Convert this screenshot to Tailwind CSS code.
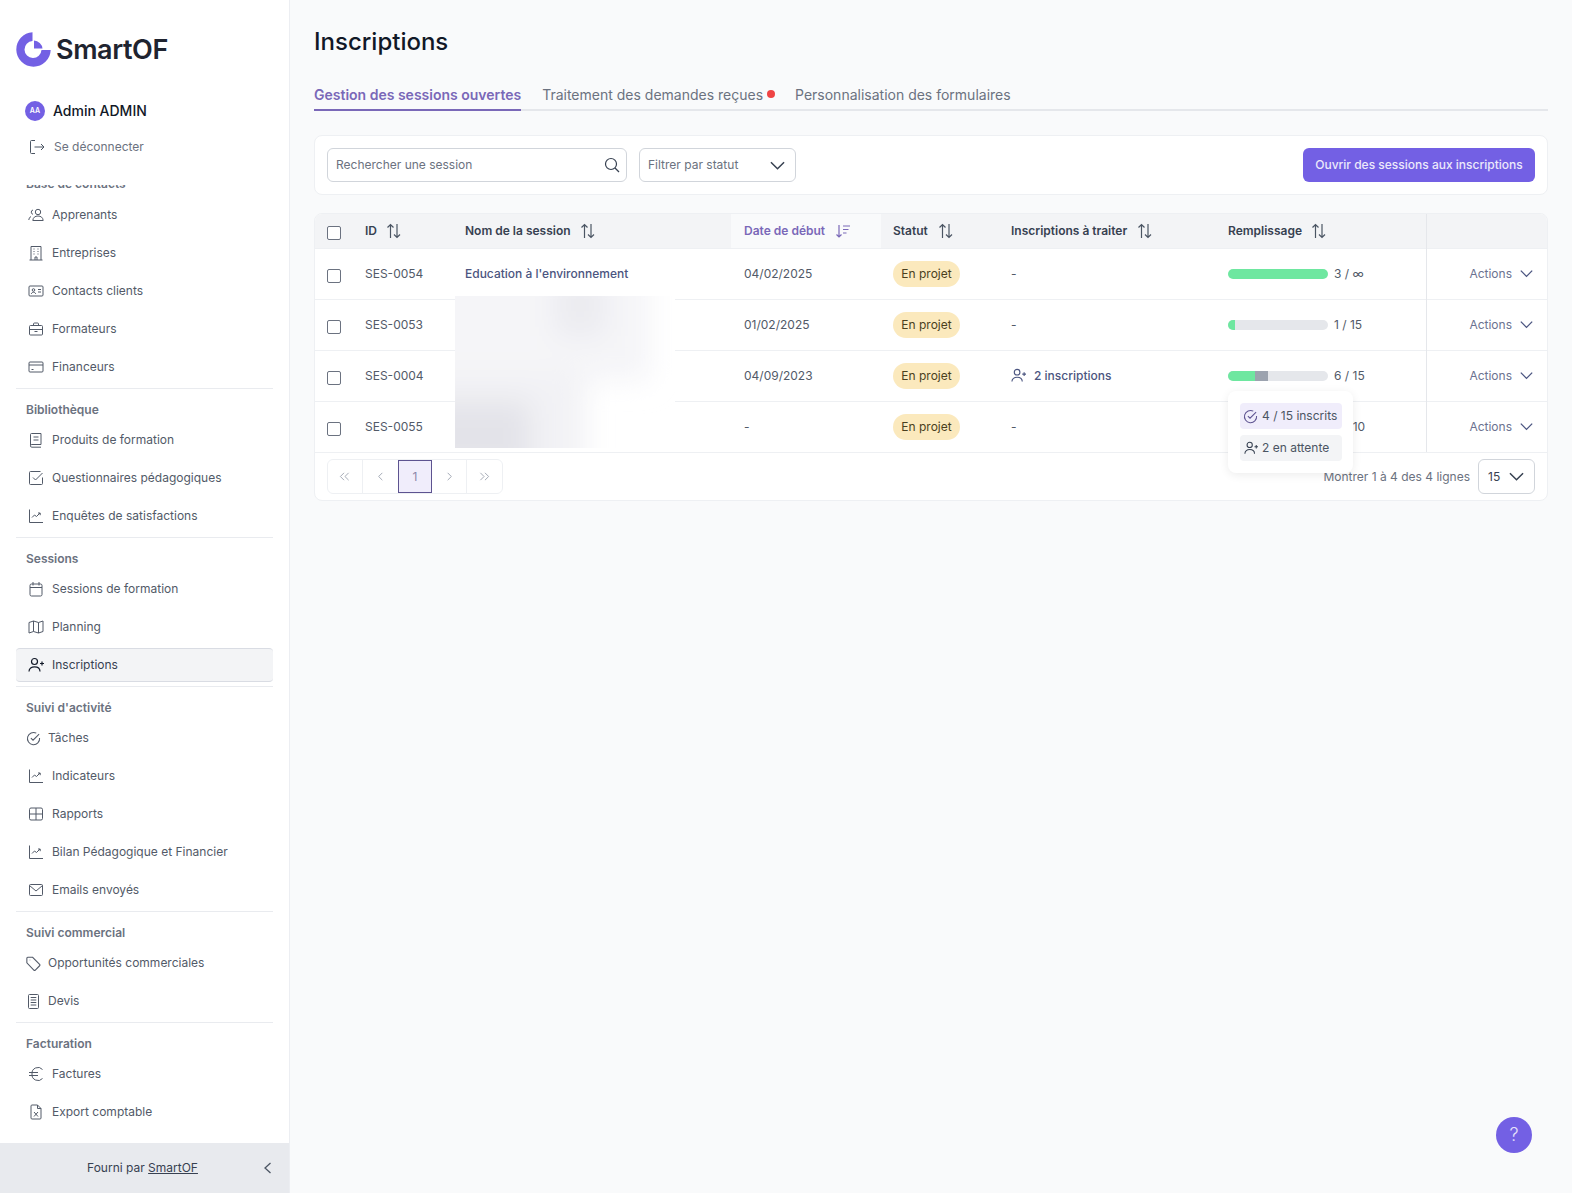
<!DOCTYPE html>
<html lang="fr"><head><meta charset="utf-8"><script src="https://cdn.jsdelivr.net/npm/@tailwindcss/browser@4"></script><title>Inscriptions</title></head>
<body class="m-0 h-[1193px] overflow-hidden bg-[#f9fafb] font-['Inter',sans-serif] text-[12px] text-[#525a68]">
<svg width="0" height="0" class="absolute">
<defs>
<symbol id="chart" viewBox="0 0 16 16" fill="none" stroke="currentColor" stroke-width="1"><path d="M1.500 1.500v13h13.500M4 9.500l2.500-2.500 2 1.500 3.500-3.500M10 5h2.200v2.200"/></symbol>
<symbol id="sort" viewBox="0 0 16 16" fill="none" stroke="currentColor" stroke-width="1.200"><path d="M4.500 15V1.500M1.500 4.500l3-3 3 3M11 1v13.500M8 11.500l3 3 3-3"/></symbol>
<symbol id="chev" viewBox="0 0 16 16" fill="none" stroke="currentColor" stroke-width="1.600"><path d="M1 4.500l7 7 7-7"/></symbol>
<symbol id="userplus" viewBox="0 0 16 16" fill="none" stroke="currentColor" stroke-width="1.200"><circle cx="6.500" cy="4.500" r="3"/><path d="M1 14.500c0-3 2.500-4.700 5.500-4.700s5.500 1.700 5.500 4.700M12 6.500h4M14 4.500v4"/></symbol>
<symbol id="checkc" viewBox="0 0 16 16" fill="none" stroke="currentColor" stroke-width="1.100"><path d="M14.500 7.400A6.500 6.500 0 1 1 11 2.300M5.200 7.500l2.300 2.300 6.500-6.500"/></symbol>
</defs>
</svg>
<div class="flex h-[1193px]">
<aside class="flex w-[290px] shrink-0 flex-col border-r border-[#eceef2] bg-white">
 <div class="flex h-[100px] shrink-0 items-start pl-4 pt-8">
  <svg width="35" height="35" viewBox="0 0 35 35" class="shrink-0"><path d="M16.500 .3A17.200 17.200 0 1 0 34.700 18L25.500 18A8.500 8.500 0 1 1 16.500 9Z" fill="#7360e4"/><path d="M18 8.500A9 9 0 0 1 26.500 16.500L18 16.500Z" fill="#7360e4"/></svg>
  <span class="ml-[5px] text-[27px] leading-[35px] font-semibold tracking-[-0.4px] text-[#1f2430]">SmartOF</span>
 </div>
 <div class="flex h-[22px] shrink-0 items-center pl-[25px]">
  <span class="flex size-5 items-center justify-center rounded-full bg-[#7360e4] text-[7px] font-semibold text-white">AA</span>
  <span class="ml-2 text-sm font-medium text-[#111827]">Admin ADMIN</span>
 </div>
 <div class="mt-[17px] flex h-4 shrink-0 items-center pl-[29px]">
  <svg class="size-4 text-[#4b5563]" viewBox="0 0 16 16" fill="none" stroke="currentColor"><path d="M6 1.500H2.500A1 1 0 0 0 1.500 2.500v11a1 1 0 0 0 1 1H6M5.500 8h9.500M12 5l3 3-3 3"/></svg>
  <span class="ml-[9px] text-[#6b7280]">Se déconnecter</span>
 </div>
 <nav class="mt-[30px] min-h-0 flex-1 overflow-hidden">
  <div class="-mt-[8px] px-4">
   <div class="flex h-[14px] items-center pl-[10px] font-semibold text-[#6b7280]">Base de contacts</div>
   <ul class="mt-[5px]">
    <li class="flex h-[38px] items-center gap-2 pl-3"><svg class="size-4 -scale-x-100" viewBox="0 0 16 16" fill="none" stroke="currentColor"><circle cx="6" cy="5" r="2.700"/><path d="M.8 13.500c.3-3 2.300-4.500 5.200-4.500s5 1.500 5.200 4.500zM11 3a2.200 2.200 0 0 1 0 4.300M13 9.500c1.300.6 2 2 2.200 3.500"/></svg><span>Apprenants</span></li>
    <li class="flex h-[38px] items-center gap-2 pl-3"><svg class="size-4" viewBox="0 0 16 16" fill="none" stroke="currentColor"><path d="M3 15V1.500h10V15M1.500 15h13M7 15v-3h2v3M5.500 4h1M9.500 4h1M5.500 6.500h1M9.500 6.500h1M5.500 9h1M9.500 9h1"/></svg><span>Entreprises</span></li>
    <li class="flex h-[38px] items-center gap-2 pl-3"><svg class="size-4" viewBox="0 0 16 16" fill="none" stroke="currentColor"><rect x="1" y="3" width="14" height="10" rx="1"/><circle cx="5.500" cy="7" r="1.300"/><path d="M3.300 11c.3-1.200 1.200-1.800 2.200-1.800s1.900.6 2.200 1.800M10 6.500h3M10 9h3"/></svg><span>Contacts clients</span></li>
    <li class="flex h-[38px] items-center gap-2 pl-3"><svg class="size-4" viewBox="0 0 16 16" fill="none" stroke="currentColor"><rect x="1.500" y="4.500" width="13" height="9.500" rx="1"/><path d="M5.500 4.500V3a1 1 0 0 1 1-1h3a1 1 0 0 1 1 1v1.500M1.500 8.500h13M6.500 10.500h3"/></svg><span>Formateurs</span></li>
    <li class="flex h-[38px] items-center gap-2 pl-3"><svg class="size-4" viewBox="0 0 16 16" fill="none" stroke="currentColor"><rect x="1" y="3" width="14" height="10" rx="1"/><path d="M1 6h14M3.500 10.500h2"/></svg><span>Financeurs</span></li>
   </ul>
   <div class="mt-[2px] border-t border-[#e9ebef]"></div>
   <div class="mt-[14px] flex h-[14px] items-center pl-[10px] font-semibold text-[#6b7280]">Bibliothèque</div>
   <ul class="mt-[4px]">
    <li class="flex h-[38px] items-center gap-2 pl-3"><svg class="size-4" viewBox="0 0 16 16" fill="none" stroke="currentColor"><path d="M2.500 13V2.500a1 1 0 0 1 1-1h9.500v11H3.800a1.300 1.300 0 0 0 0 2.700H13M5.500 5h5M5.500 8h5"/></svg><span>Produits de formation</span></li>
    <li class="flex h-[38px] items-center gap-2 pl-3"><svg class="size-4" viewBox="0 0 16 16" fill="none" stroke="currentColor"><path d="M14.500 7.500v6a1 1 0 0 1-1 1h-11a1 1 0 0 1-1-1v-11a1 1 0 0 1 1-1h10M5 7.500l2.500 2.500 7-7"/></svg><span>Questionnaires pédagogiques</span></li>
    <li class="flex h-[38px] items-center gap-2 pl-3"><svg class="size-4"><use href="#chart"/></svg><span>Enquêtes de satisfactions</span></li>
   </ul>
   <div class="mt-[2px] border-t border-[#e9ebef]"></div>
   <div class="mt-[14px] flex h-[14px] items-center pl-[10px] font-semibold text-[#6b7280]">Sessions</div>
   <ul class="mt-[4px]">
    <li class="flex h-[38px] items-center gap-2 pl-3"><svg class="size-4" viewBox="0 0 16 16" fill="none" stroke="currentColor"><rect x="2" y="3" width="12" height="12" rx="1.500"/><path d="M5 1v3.500M11 1v3.500M2 6.500h12"/></svg><span>Sessions de formation</span></li>
    <li class="flex h-[38px] items-center gap-2 pl-3"><svg class="size-4" viewBox="0 0 16 16" fill="none" stroke="currentColor"><path d="M1 3.500 5.500 2l5 1.500L15 2v10.500L10.500 14l-5-1.500L1 14zM5.500 2v10.500M10.500 3.500V14"/></svg><span>Planning</span></li>
    <li class="my-[2px] flex h-[34px] items-center gap-2 rounded-[4px] border-y border-[#d9dce3] bg-[#f3f4f6] pl-3 text-[#374151]"><svg class="size-4 text-[#111827]"><use href="#userplus"/></svg><span>Inscriptions</span></li>
   </ul>
   <div class="mt-[4px] border-t border-[#e9ebef]"></div>
   <div class="mt-[14px] flex h-[14px] items-center pl-[10px] font-semibold text-[#6b7280]">Suivi d'activité</div>
   <ul class="mt-[4px]">
    <li class="flex h-[38px] items-center gap-[7px] pl-[10px]"><svg class="size-[15px]"><use href="#checkc"/></svg><span>Tâches</span></li>
    <li class="flex h-[38px] items-center gap-2 pl-3"><svg class="size-4"><use href="#chart"/></svg><span>Indicateurs</span></li>
    <li class="flex h-[38px] items-center gap-2 pl-3"><svg class="size-4" viewBox="0 0 16 16" fill="none" stroke="currentColor"><rect x="1.500" y="2" width="13" height="12" rx="1.500"/><path d="M1.500 8h13M8 2v12"/></svg><span>Rapports</span></li>
    <li class="flex h-[38px] items-center gap-2 pl-3"><svg class="size-4"><use href="#chart"/></svg><span>Bilan Pédagogique et Financier</span></li>
    <li class="flex h-[38px] items-center gap-2 pl-3"><svg class="size-4" viewBox="0 0 16 16" fill="none" stroke="currentColor"><rect x="1.500" y="2.500" width="13" height="11" rx="1"/><path d="M1.500 3.500 8 9l6.500-5.500"/></svg><span>Emails envoyés</span></li>
   </ul>
   <div class="mt-[2px] border-t border-[#e9ebef]"></div>
   <div class="mt-[14px] flex h-[14px] items-center pl-[10px] font-semibold text-[#6b7280]">Suivi commercial</div>
   <ul class="mt-[4px]">
    <li class="flex h-[38px] items-center gap-[7px] pl-[10px]"><svg class="size-[15px]" viewBox="0 0 14 14" fill="none" stroke="currentColor"><path d="M.8 2v4.300l6.500 6.800a1 1 0 0 0 1.400 0l4-4a1 1 0 0 0 0-1.400L6.200 1.200H1.600a.8.8 0 0 0-.8.800zM3.500 3.800h.4"/></svg><span>Opportunités commerciales</span></li>
    <li class="flex h-[38px] items-center gap-[9px] pl-3"><svg class="h-[15px] w-[11px]" viewBox="0 0 11 15" fill="none" stroke="currentColor"><rect x=".5" y=".5" width="10" height="14" rx="1"/><path d="M2.700 3.500h5.600M2.700 6h5.600M2.700 8.500h5.600M2.700 11h5.600"/></svg><span>Devis</span></li>
   </ul>
   <div class="mt-[2px] border-t border-[#e9ebef]"></div>
   <div class="mt-[14px] flex h-[14px] items-center pl-[10px] font-semibold text-[#6b7280]">Facturation</div>
   <ul class="mt-[4px]">
    <li class="flex h-[38px] items-center gap-2 pl-3"><svg class="size-4" viewBox="0 0 16 16" fill="none" stroke="currentColor"><path d="M14.500 3.500A6 6 0 0 0 4 8a6 6 0 0 0 10.500 4.500M1 6.500h9M1 9.500h9"/></svg><span>Factures</span></li>
    <li class="flex h-[38px] items-center gap-2 pl-3"><svg class="size-4" viewBox="0 0 16 16" fill="none" stroke="currentColor"><path d="M9.500 1H4a1 1 0 0 0-1 1v12a1 1 0 0 0 1 1h8a1 1 0 0 0 1-1V4.500zM9.500 1v3.500H13M6 8l4 4.500M10 8l-4 4.500"/></svg><span>Export comptable</span></li>
   </ul>
  </div>
 </nav>
 <div class="relative flex h-[50px] shrink-0 items-center justify-center bg-[#e8eaee] pr-[4px] text-[#374151]">
  <span>Fourni par <span class="underline">SmartOF</span></span>
  <svg class="absolute right-[15px] top-[19px] size-3 text-[#4b5563]" viewBox="0 0 12 12" fill="none" stroke="currentColor" stroke-width="1.300"><path d="M8.500 1 3 6l5.500 5"/></svg>
 </div>
</aside>
<main class="min-w-0 flex-1 pl-6 pr-6">
 <h1 class="mt-[26px] text-2xl leading-[32px] font-medium text-[#111827]">Inscriptions</h1>
 <div class="mt-[25px] flex h-[28px] items-start border-b-2 border-[#e5e7eb] text-sm">
  <span class="-mb-[2px] h-[28px] border-b-2 border-[#7a68b8] pt-[2px] font-semibold text-[#7a68b8]">Gestion des sessions ouvertes</span>
  <span class="ml-[21px] flex pt-[2px] text-[#6b7280]">Traitement des demandes reçues<span class="ml-1 mt-[5px] size-2 rounded-full bg-[#ef4444]"></span></span>
  <span class="ml-5 pt-[2px] text-[#6b7280]">Personnalisation des formulaires</span>
 </div>
 <div class="mt-[24px] flex h-[60px] items-center rounded-lg border border-[#eef0f3] bg-white px-3">
  <div class="flex h-[34px] w-[300px] items-center justify-between rounded-md border border-[#d1d5db] bg-white pl-2 pr-[6px] text-[#6b7280]"><span>Rechercher une session</span><svg class="size-4 text-[#374151]" viewBox="0 0 16 16" fill="none" stroke="currentColor" stroke-width="1.200"><circle cx="7" cy="7" r="5.500"/><path d="m11 11 4 4"/></svg></div>
  <div class="ml-3 flex h-[34px] w-[157px] items-center justify-between rounded-md border border-[#d1d5db] bg-white pl-2 pr-[10px] text-[#6b7280]"><span>Filtrer par statut</span><svg class="size-[15px] text-[#374151]"><use href="#chev"/></svg></div>
  <button class="ml-auto h-[34px] w-[232px] rounded-md bg-[#7360e4] text-center font-medium text-[#ece9fb]">Ouvrir des sessions aux inscriptions</button>
 </div>
 <div class="relative mt-[18px] overflow-hidden rounded-lg border border-[#eef0f3] bg-white">
  <table class="w-[1232px] table-fixed border-collapse text-left">
   <colgroup><col class="w-[38px]"><col class="w-[100px]"><col class="w-[278px]"><col class="w-[150px]"><col class="w-[118px]"><col class="w-[217px]"><col class="w-[210px]"><col class="w-[121px]"></colgroup>
   <thead><tr class="h-[34px] bg-[#f3f4f6] text-[#374151]">
    <th class="pl-3"><span class="block size-[14px] translate-y-[2px] rounded-[2px] border border-[#6b7280] bg-white"></span></th>
    <th class="pl-3 font-semibold"><span class="flex items-center gap-[9px]">ID <svg class="size-4 text-[#4b5563]"><use href="#sort"/></svg></span></th>
    <th class="pl-3 font-semibold"><span class="flex items-center gap-[9px]">Nom de la session <svg class="size-4 text-[#4b5563]"><use href="#sort"/></svg></span></th>
    <th class="bg-[#f9fafb] pl-[13px] font-semibold text-[#7a68b8]"><span class="flex items-center gap-[10px]">Date de début <svg class="size-4" viewBox="0 0 16 16" fill="none" stroke="currentColor" stroke-width="1.200"><path d="M4 2v12M1.500 11.500 4 14l2.500-2.500M8 3h7M8 6.500h5.500M8 10h3.500"/></svg></span></th>
    <th class="pl-3 font-semibold"><span class="flex items-center gap-[10px]">Statut <svg class="size-4 text-[#4b5563]"><use href="#sort"/></svg></span></th>
    <th class="pl-3 font-semibold"><span class="flex items-center gap-[10px]">Inscriptions à traiter <svg class="size-4 text-[#4b5563]"><use href="#sort"/></svg></span></th>
    <th class="pl-3 font-semibold"><span class="flex items-center gap-[9px]">Remplissage <svg class="size-4 text-[#4b5563]"><use href="#sort"/></svg></span></th>
    <th class="border-l border-[#e5e7eb]"></th>
   </tr></thead>
   <tbody>
    <tr class="h-[51px] border-t border-[#eef0f3]">
     <td class="pl-3"><span class="block size-[14px] translate-y-[2px] rounded-[2px] border border-[#6b7280] bg-white"></span></td>
     <td class="pl-3">SES-0054</td>
     <td class="pl-3 font-medium text-[#4b5580]">Education à l'environnement</td>
     <td class="pl-[13px]">04/02/2025</td>
     <td class="pl-3"><span class="inline-flex h-[26px] w-[67px] items-center justify-center rounded-full bg-[#fbe9bd] text-[#4a3f1e]">En projet</span></td>
     <td class="pl-3">-</td>
     <td class="pl-3"><div class="flex items-center gap-[6px]"><span class="flex h-[10px] w-[100px] overflow-hidden rounded-full bg-[#e5e7eb]"><span class="w-full bg-[#6ee7a0]"></span></span>3 / ∞</div></td>
     <td class="border-l border-[#e5e7eb] pr-[14px]"><div class="flex items-center justify-end gap-2 text-[#6b7290]">Actions <svg class="size-[13px] text-[#4b5580]"><use href="#chev"/></svg></div></td>
    </tr>
    <tr class="h-[51px] border-t border-[#eef0f3]">
     <td class="pl-3"><span class="block size-[14px] translate-y-[2px] rounded-[2px] border border-[#6b7280] bg-white"></span></td>
     <td class="pl-3">SES-0053</td>
     <td class="pl-3"></td>
     <td class="pl-[13px]">01/02/2025</td>
     <td class="pl-3"><span class="inline-flex h-[26px] w-[67px] items-center justify-center rounded-full bg-[#fbe9bd] text-[#4a3f1e]">En projet</span></td>
     <td class="pl-3">-</td>
     <td class="pl-3"><div class="flex items-center gap-[6px]"><span class="flex h-[10px] w-[100px] overflow-hidden rounded-full bg-[#e5e7eb]"><span class="w-[7%] bg-[#6ee7a0]"></span></span>1 / 15</div></td>
     <td class="border-l border-[#e5e7eb] pr-[14px]"><div class="flex items-center justify-end gap-2 text-[#6b7290]">Actions <svg class="size-[13px] text-[#4b5580]"><use href="#chev"/></svg></div></td>
    </tr>
    <tr class="h-[51px] border-t border-[#eef0f3]">
     <td class="pl-3"><span class="block size-[14px] translate-y-[2px] rounded-[2px] border border-[#6b7280] bg-white"></span></td>
     <td class="pl-3">SES-0004</td>
     <td class="pl-3"></td>
     <td class="pl-[13px]">04/09/2023</td>
     <td class="pl-3"><span class="inline-flex h-[26px] w-[67px] items-center justify-center rounded-full bg-[#fbe9bd] text-[#4a3f1e]">En projet</span></td>
     <td class="pl-3"><span class="flex items-center gap-2 font-medium text-[#4b5580]"><svg class="size-[15px]"><use href="#userplus"/></svg>2 inscriptions</span></td>
     <td class="pl-3"><div class="flex items-center gap-[6px]"><span class="flex h-[10px] w-[100px] overflow-hidden rounded-full bg-[#e5e7eb]"><span class="w-[27%] bg-[#6ee7a0]"></span><span class="w-[13%] bg-[#9ca3af]"></span></span>6 / 15</div></td>
     <td class="border-l border-[#e5e7eb] pr-[14px]"><div class="flex items-center justify-end gap-2 text-[#6b7290]">Actions <svg class="size-[13px] text-[#4b5580]"><use href="#chev"/></svg></div></td>
    </tr>
    <tr class="h-[51px] border-t border-[#eef0f3]">
     <td class="pl-3"><span class="block size-[14px] translate-y-[2px] rounded-[2px] border border-[#6b7280] bg-white"></span></td>
     <td class="pl-3">SES-0055</td>
     <td class="pl-3"></td>
     <td class="pl-[13px]">-</td>
     <td class="pl-3"><span class="inline-flex h-[26px] w-[67px] items-center justify-center rounded-full bg-[#fbe9bd] text-[#4a3f1e]">En projet</span></td>
     <td class="pl-3">-</td>
     <td class="pl-3"><div class="flex items-center gap-[6px]"><span class="flex h-[10px] w-[100px] overflow-hidden rounded-full bg-[#e5e7eb]"></span>0 / 10</div></td>
     <td class="border-l border-[#e5e7eb] pr-[14px]"><div class="flex items-center justify-end gap-2 text-[#6b7290]">Actions <svg class="size-[13px] text-[#4b5580]"><use href="#chev"/></svg></div></td>
    </tr>
   </tbody>
  </table>
  <div class="flex h-[48px] items-center justify-between border-t border-[#eef0f3] pl-3 pr-3">
   <div class="grid h-[35px] w-[176px] grid-cols-5 overflow-hidden rounded-md border border-[#eef0f3] text-[#9ca3af]">
    <span class="flex items-center justify-center border-r border-[#eef0f3]"><svg class="size-[11px]" viewBox="0 0 12 12" fill="none" stroke="currentColor"><path d="M5.500 2 1.500 6l4 4M10.500 2l-4 4 4 4"/></svg></span>
    <span class="flex items-center justify-center"><svg class="size-[11px]" viewBox="0 0 12 12" fill="none" stroke="currentColor"><path d="M8 2 4 6l4 4"/></svg></span>
    <span class="flex items-center justify-center border border-[#5d5390] bg-[#f0edfb] text-[#8a85a8]">1</span>
    <span class="flex items-center justify-center border-r border-[#eef0f3]"><svg class="size-[11px]" viewBox="0 0 12 12" fill="none" stroke="currentColor"><path d="m4 2 4 4-4 4"/></svg></span>
    <span class="flex items-center justify-center"><svg class="size-[11px]" viewBox="0 0 12 12" fill="none" stroke="currentColor"><path d="m1.500 2 4 4-4 4M6.500 2l4 4-4 4"/></svg></span>
   </div>
   <div class="flex items-center gap-2 text-[#6b7280]"><span>Montrer 1 à 4 des 4 lignes</span><span class="flex h-[35px] w-[57px] items-center justify-between rounded-md border border-[#d1d5db] pl-[9px] pr-[10px] text-[#374151]">15<svg class="size-[15px]"><use href="#chev"/></svg></span></div>
  </div>
  <svg class="absolute left-[140px] top-[82px]" width="220" height="152" viewBox="0 0 220 152"><defs><filter id="b" x="-40%" y="-40%" width="180%" height="180%"><feGaussianBlur stdDeviation="14"/></filter><clipPath id="c"><rect width="220" height="152"/></clipPath></defs><g clip-path="url(#c)"><rect width="220" height="152" fill="#fff"/><g filter="url(#b)"><rect x="-30" y="-30" width="225" height="115" fill="#f5f5f8"/><rect x="100" y="-20" width="50" height="60" fill="#ebebf0"/><rect x="-30" y="75" width="160" height="110" fill="#f2f2f5"/><rect x="-30" y="105" width="105" height="70" fill="#e3e3e9"/></g></g></svg>
  <div class="absolute left-[913px] top-[177px] h-[82px] w-[125px] rounded-lg bg-white p-3 shadow-[0_2px_10px_rgba(0,0,0,0.08)]">
   <div class="flex h-[26px] w-[102px] items-center gap-1 rounded bg-[#f0edfb] pl-[3px] whitespace-nowrap text-[#4b5563]"><svg class="size-[15px] shrink-0 text-[#5d5390]"><use href="#checkc"/></svg>4 / 15 inscrits</div>
   <div class="mt-[6px] flex h-[26px] w-[102px] items-center gap-1 rounded bg-[#f3f4f6] pl-1 whitespace-nowrap text-[#4b5563]"><svg class="size-[14px] shrink-0 text-[#374151]"><use href="#userplus"/></svg>2 en attente</div>
  </div>
 </div>
</main>
</div>
<button class="absolute left-[1496px] top-[1117px] flex size-9 items-center justify-center rounded-full bg-[#7360e4] text-lg font-light text-[#e6e2fa]">?</button>
</body></html>
